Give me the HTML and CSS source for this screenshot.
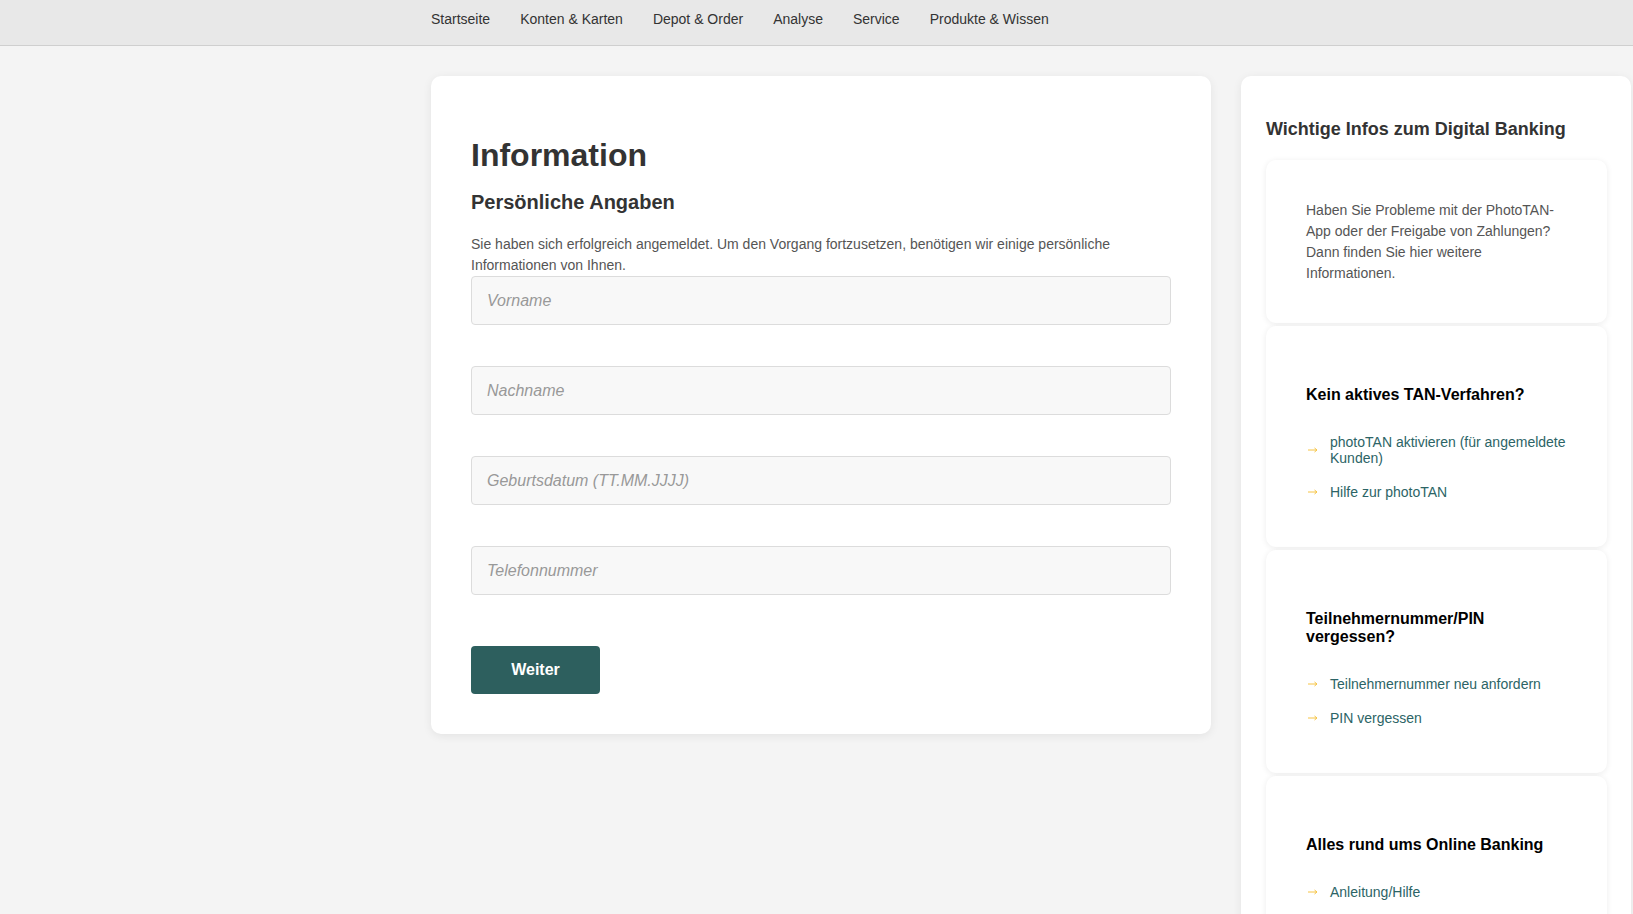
FILE: index.html
```html
<!DOCTYPE html>
<html lang="de">
<head>
<meta charset="utf-8">
<title>Information</title>
<link rel="stylesheet" href="styles.css">
</head>
<body>
<nav class="topnav">
  <ul class="nav-list">
    <li><a href="#">Startseite</a></li>
    <li><a href="#">Konten &amp; Karten</a></li>
    <li><a href="#">Depot &amp; Order</a></li>
    <li><a href="#">Analyse</a></li>
    <li><a href="#">Service</a></li>
    <li><a href="#">Produkte &amp; Wissen</a></li>
  </ul>
</nav>

<div class="layout">
  <main class="main-card">
    <h1 class="title">Information</h1>
    <h2 class="subtitle">Persönliche Angaben</h2>
    <p class="intro">Sie haben sich erfolgreich angemeldet. Um den Vorgang fortzusetzen, benötigen wir einige persönliche Informationen von Ihnen.</p>
    <form class="form">
      <input class="field" type="text" placeholder="Vorname">
      <input class="field" type="text" placeholder="Nachname">
      <input class="field" type="text" placeholder="Geburtsdatum (TT.MM.JJJJ)">
      <input class="field" type="text" placeholder="Telefonnummer">
      <button class="btn" type="button">Weiter</button>
    </form>
  </main>

  <aside class="sidebar">
    <h3 class="side-title">Wichtige Infos zum Digital Banking</h3>

    <section class="info-card info-text">
      <p>Haben Sie Probleme mit der PhotoTAN-App oder der Freigabe von Zahlungen? Dann finden Sie hier weitere Informationen.</p>
    </section>

    <section class="info-card">
      <h4 class="card-title">Kein aktives TAN-Verfahren?</h4>
      <ul class="links">
        <li><span class="arrow"><svg width="10" height="6" viewBox="0 0 10 6"><path d="M0 3H9M6.5 1L9 3L6.5 5" fill="none" stroke="currentColor" stroke-width="1"/></svg></span><a href="#">photoTAN aktivieren (für angemeldete Kunden)</a></li>
        <li><span class="arrow"><svg width="10" height="6" viewBox="0 0 10 6"><path d="M0 3H9M6.5 1L9 3L6.5 5" fill="none" stroke="currentColor" stroke-width="1"/></svg></span><a href="#">Hilfe zur photoTAN</a></li>
      </ul>
    </section>

    <section class="info-card">
      <h4 class="card-title">Teilnehmernummer/PIN vergessen?</h4>
      <ul class="links">
        <li><span class="arrow"><svg width="10" height="6" viewBox="0 0 10 6"><path d="M0 3H9M6.5 1L9 3L6.5 5" fill="none" stroke="currentColor" stroke-width="1"/></svg></span><a href="#">Teilnehmernummer neu anfordern</a></li>
        <li><span class="arrow"><svg width="10" height="6" viewBox="0 0 10 6"><path d="M0 3H9M6.5 1L9 3L6.5 5" fill="none" stroke="currentColor" stroke-width="1"/></svg></span><a href="#">PIN vergessen</a></li>
      </ul>
    </section>

    <section class="info-card">
      <h4 class="card-title">Alles rund ums Online Banking</h4>
      <ul class="links">
        <li><span class="arrow"><svg width="10" height="6" viewBox="0 0 10 6"><path d="M0 3H9M6.5 1L9 3L6.5 5" fill="none" stroke="currentColor" stroke-width="1"/></svg></span><a href="#">Anleitung/Hilfe</a></li>
        <li><span class="arrow"><svg width="10" height="6" viewBox="0 0 10 6"><path d="M0 3H9M6.5 1L9 3L6.5 5" fill="none" stroke="currentColor" stroke-width="1"/></svg></span><a href="#">Sicherheit</a></li>
      </ul>
    </section>
  </aside>
</div>
</body>
</html>
```

FILE: styles.css
```css
* { box-sizing: border-box; }

html, body {
  margin: 0;
  padding: 0;
}

body {
  background: #f4f4f4;
  font-family: "Liberation Sans", Arial, sans-serif;
  color: #333;
}

a { text-decoration: none; }

.topnav {
  height: 46px;
  background: #e8e8e8;
  border-bottom: 1px solid #cfcfcf;
}

.nav-list {
  list-style: none;
  margin: 0 0 0 431px;
  padding: 10px 0 0;
  display: flex;
  gap: 30px;
}

.nav-list a {
  font-size: 14px;
  line-height: 16px;
  color: #333;
}

.layout {
  display: flex;
  align-items: flex-start;
  gap: 30px;
  margin: 30px 0 0 431px;
}

.main-card {
  width: 780px;
  flex: none;
  background: #fff;
  border-radius: 10px;
  box-shadow: 0 2px 10px rgba(0, 0, 0, 0.07);
  padding: 40px 40px 40px;
}

.title {
  font-size: 32px;
  line-height: 37px;
  font-weight: bold;
  color: #333;
  margin: 21px 0 17px;
}

.subtitle {
  font-size: 20px;
  line-height: 23px;
  font-weight: bold;
  color: #333;
  margin: 0 0 20px;
}

.intro {
  font-size: 14px;
  line-height: 21px;
  color: #555;
  margin: 0;
}

.form {
  display: flex;
  flex-direction: column;
  align-items: flex-start;
}

.field {
  display: block;
  width: 100%;
  height: 49px;
  margin: 0 0 41px;
  padding: 0 15px;
  background: #f8f8f8;
  border: 1px solid #dcdcdc;
  border-radius: 4px;
  font-family: "Liberation Sans", Arial, sans-serif;
  font-size: 16px;
  color: #333;
}

.field::placeholder {
  color: #999;
  font-style: italic;
}

.btn {
  margin-top: 10px;
  width: 129px;
  height: 48px;
  border: none;
  border-radius: 4px;
  background: #2d5f5e;
  color: #fff;
  font-family: "Liberation Sans", Arial, sans-serif;
  font-size: 16px;
  font-weight: bold;
}

.sidebar {
  width: 390px;
  flex: none;
  background: #fff;
  border-radius: 10px;
  box-shadow: 0 2px 10px rgba(0, 0, 0, 0.07);
  padding: 24px 24px 24px 25px;
}

.side-title {
  font-size: 18px;
  line-height: 21px;
  font-weight: bold;
  color: #333;
  margin: 19px 0 20px;
}

.info-card {
  background: #fff;
  border-radius: 10px;
  box-shadow: 0 1px 6px rgba(0, 0, 0, 0.08);
  padding: 40px 40px 38px;
  margin-bottom: 3px;
}

.info-text {
  padding: 40px 40px 39px;
}

.info-text p {
  margin: 0;
  font-size: 14px;
  line-height: 21px;
  color: #555;
}

.card-title {
  font-size: 16px;
  line-height: 18px;
  font-weight: bold;
  color: #000;
  margin: 20px 0 21px;
}

.links {
  list-style: none;
  margin: 0;
  padding: 0;
}

.links li {
  display: flex;
  align-items: center;
  padding: 9px 0;
}

.arrow {
  flex: none;
  width: 24px;
  padding-left: 2px;
  display: flex;
  align-items: center;
  color: #f6c445;
}

.links a {
  font-size: 14px;
  line-height: 16px;
  color: #2c6466;
}
```
